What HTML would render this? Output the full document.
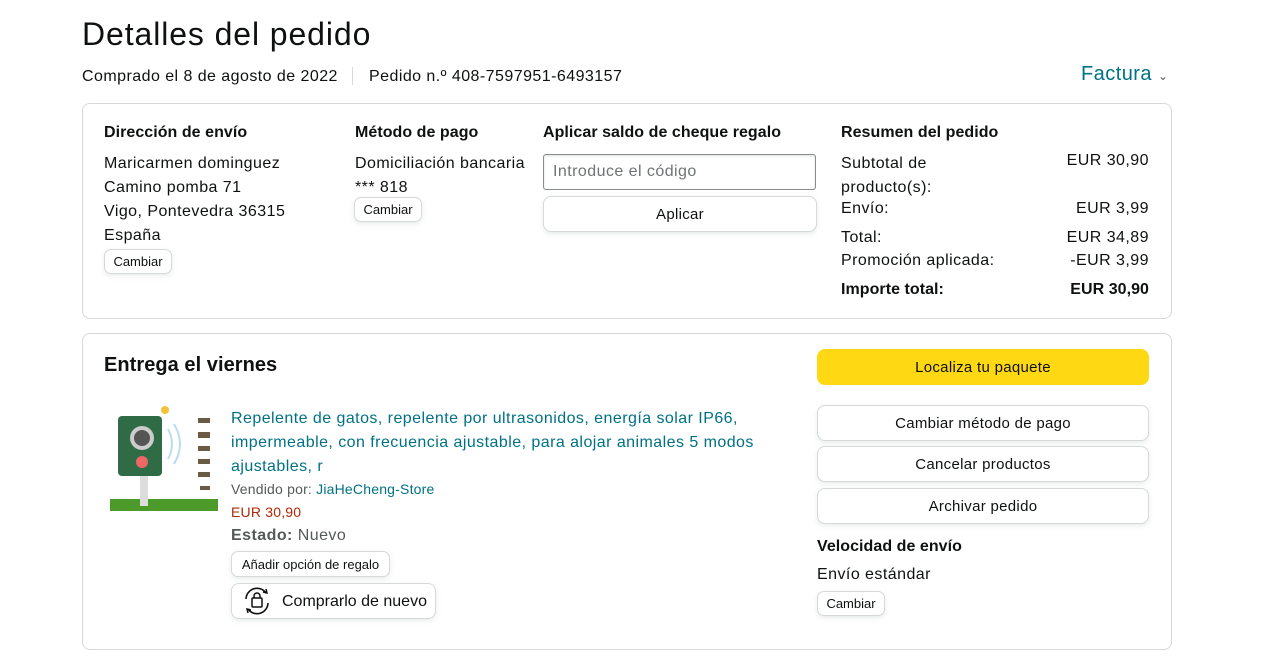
<!DOCTYPE html>
<html><head><meta charset="utf-8"><style>
*{box-sizing:border-box;margin:0;padding:0}
body{width:1280px;height:672px;background:#fff;font-family:"Liberation Sans",Arial,sans-serif;color:#0f1111;position:relative;overflow:hidden;font-size:16px;letter-spacing:0.45px}
.a{position:absolute;white-space:nowrap}
.box{position:absolute;border:1px solid #d5d9d9;border-radius:8px}
.b{font-weight:bold;letter-spacing:0.05px}
.btn{position:absolute;border:1px solid #d5d9d9;border-radius:8px;background:#fff;box-shadow:0 2px 5px rgba(213,217,217,.5);text-align:center;font-size:15px;letter-spacing:0.3px}
.sm{font-size:13px;border-radius:7px;letter-spacing:0}
.lk{color:#007185}
</style></head><body>
<div class="a" style="left:82px;top:16px;font-size:32px;letter-spacing:0.9px">Detalles del pedido</div>
<div class="a" style="left:82px;top:68px;font-size:16px">Comprado el 8 de agosto de 2022</div>
<div class="a" style="left:352px;top:67px;width:1px;height:18px;background:#d5d9d9"></div>
<div class="a" style="left:369px;top:68px;font-size:16px">Pedido n.º 408-7597951-6493157</div>
<div class="a lk" style="left:1081px;top:63px;font-size:20px">Factura <span style="font-size:12px;color:#565959">⌄</span></div>

<div class="box" style="left:82px;top:103px;width:1090px;height:216px"></div>
<div class="a b" style="left:104px;top:124px">Dirección de envío</div>
<div class="a" style="left:104px;top:152px;line-height:24px">Maricarmen dominguez<br>Camino pomba 71<br>Vigo, Pontevedra 36315<br>España</div>
<div class="btn sm" style="left:104px;top:249px;width:68px;height:25px;line-height:24px">Cambiar</div>
<div class="a b" style="left:355px;top:124px">Método de pago</div>
<div class="a" style="left:355px;top:152px;line-height:24px">Domiciliación bancaria<br>*** 818</div>
<div class="btn sm" style="left:354px;top:197px;width:68px;height:25px;line-height:24px">Cambiar</div>
<div class="a b" style="left:543px;top:124px">Aplicar saldo de cheque regalo</div>
<div class="a" style="left:543px;top:154px;width:273px;height:36px;border:1px solid #888c8c;border-radius:3px;box-shadow:inset 0 1px 2px rgba(15,17,17,.15);padding:8px 9px;color:#6f7373">Introduce el código</div>
<div class="btn" style="left:543px;top:196px;width:274px;height:36px;line-height:36px">Aplicar</div>
<div class="a b" style="left:841px;top:124px">Resumen del pedido</div>
<div class="a" style="left:841px;top:152px;line-height:24px">Subtotal de<br>producto(s):</div>
<div class="a" style="left:841px;top:200px">Envío:</div>
<div class="a" style="left:841px;top:229px">Total:</div>
<div class="a" style="left:841px;top:252px">Promoción aplicada:</div>
<div class="a b" style="left:841px;top:281px">Importe total:</div>
<div class="a" style="right:131px;top:152px">EUR 30,90</div>
<div class="a" style="right:131px;top:200px">EUR 3,99</div>
<div class="a" style="right:131px;top:229px">EUR 34,89</div>
<div class="a" style="right:131px;top:252px">-EUR 3,99</div>
<div class="a b" style="right:131px;top:281px">EUR 30,90</div>

<div class="box" style="left:82px;top:333px;width:1090px;height:317px"></div>
<div class="a b" style="left:104px;top:354px;font-size:20px">Entrega el viernes</div>
<svg class="a" style="left:110px;top:404px" width="108" height="108" viewBox="0 0 108 108">
<rect x="0" y="95" width="108" height="12" fill="#4c9a2a"/>
<rect x="30" y="70" width="8" height="32" fill="#ddd"/>
<rect x="8" y="12" width="44" height="60" rx="4" fill="#2f6b45"/>
<circle cx="32" cy="34" r="12" fill="#ccc"/><circle cx="32" cy="34" r="8" fill="#555"/>
<circle cx="32" cy="58" r="6" fill="#e66"/>
<circle cx="55" cy="6" r="4" fill="#f5c33b"/>
<path d="M58 25q8 15 0 30M64 20q12 20 0 40" stroke="#bde" fill="none" stroke-width="2"/>
<g fill="#6b5a44"><rect x="88" y="14" width="12" height="5"/><rect x="88" y="28" width="12" height="6"/><rect x="88" y="42" width="12" height="5"/><rect x="88" y="55" width="12" height="5"/><rect x="88" y="68" width="12" height="5"/><rect x="90" y="82" width="10" height="4"/></g>
</svg>
<div class="a lk" style="left:231px;top:407px;line-height:24px;white-space:normal;width:560px">Repelente de gatos, repelente por ultrasonidos, energía solar IP66, impermeable, con frecuencia ajustable, para alojar animales 5 modos ajustables, r</div>
<div class="a" style="left:231px;top:481px;font-size:14px;color:#565959;letter-spacing:0.2px">Vendido por: <span class="lk">JiaHeCheng-Store</span></div>
<div class="a" style="left:231px;top:504px;font-size:14px;color:#b12704;letter-spacing:0.2px">EUR 30,90</div>
<div class="a" style="left:231px;top:527px;color:#565959"><b>Estado:</b> Nuevo</div>
<div class="btn sm" style="left:231px;top:551px;width:159px;height:26px;line-height:25px">Añadir opción de regalo</div>
<div class="btn" style="left:231px;top:583px;width:205px;height:36px;line-height:35px;text-align:left;padding-left:50px;font-size:16px;letter-spacing:0">Comprarlo de nuevo</div>
<svg class="a" style="left:241px;top:586px" width="32" height="30" viewBox="0 0 32 30"><path d="M5 13a11 11 0 0 1 20-6M27 17a11 11 0 0 1-20 6" stroke="#0f1111" stroke-width="1.6" fill="none"/><path d="M22 6l4 1-1-4M10 24l-4-1 1 4" stroke="#0f1111" stroke-width="1.5" fill="none"/><rect x="11" y="12" width="10" height="9" rx="1" stroke="#0f1111" stroke-width="1.5" fill="none"/><path d="M13 12v-2a3 3 0 0 1 6 0v2" stroke="#0f1111" stroke-width="1.5" fill="none"/></svg>

<div class="btn" style="left:817px;top:349px;width:332px;height:36px;line-height:38px;background:#ffd814;border:none;box-shadow:none">Localiza tu paquete</div>
<div class="btn" style="left:817px;top:405px;width:332px;height:36px;line-height:36px">Cambiar método de pago</div>
<div class="btn" style="left:817px;top:446px;width:332px;height:36px;line-height:36px">Cancelar productos</div>
<div class="btn" style="left:817px;top:488px;width:332px;height:36px;line-height:36px">Archivar pedido</div>
<div class="a b" style="left:817px;top:538px">Velocidad de envío</div>
<div class="a" style="left:817px;top:566px">Envío estándar</div>
<div class="btn sm" style="left:817px;top:591px;width:68px;height:25px;line-height:24px">Cambiar</div>
</body></html>
